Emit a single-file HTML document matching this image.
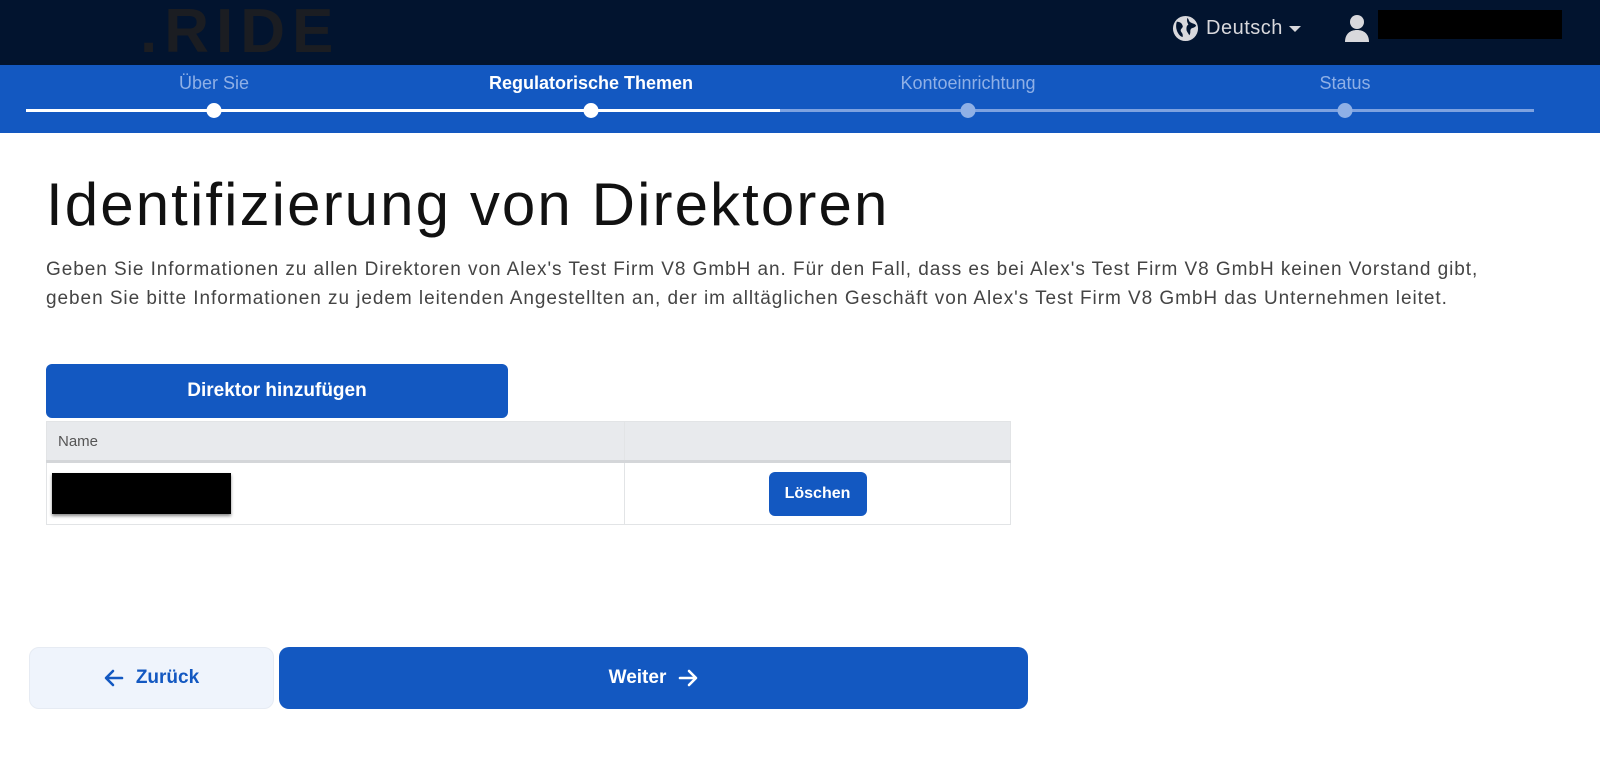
<!DOCTYPE html>
<html><head><meta charset="utf-8"><style>
*{box-sizing:border-box;margin:0;padding:0}
body{width:1600px;height:776px;overflow:hidden;background:#fff;font-family:"Liberation Sans",sans-serif;position:relative}
.hdr{position:absolute;left:0;top:0;width:1600px;height:65px;background:#02142f}
.logo{position:absolute;left:140px;top:-4px;font-size:62px;font-weight:bold;color:#1b1d22;letter-spacing:7px}
.lang{position:absolute;left:1172px;top:15px;color:#d8d8dc;font-size:20px;display:flex;align-items:center}
.stp{position:absolute;left:0;top:65px;width:1600px;height:68px;background:#1358c1}
.lbl{position:absolute;top:8px;font-size:18px;transform:translateX(-50%);white-space:nowrap;color:#8fb0e6}
.dot{position:absolute;top:38px;width:15px;height:15px;border-radius:50%;transform:translateX(-50%)}
h1{position:absolute;left:46px;top:170px;font-size:60px;font-weight:normal;color:#111;letter-spacing:2.1px}
p.d{position:absolute;left:46px;top:255px;width:1540px;font-size:19px;line-height:29px;color:#444;letter-spacing:0.95px;white-space:nowrap}
.btn{position:absolute;background:#1358c1;color:#fff;font-weight:bold;display:flex;align-items:center;justify-content:center;border-radius:6px}
table{position:absolute;left:46px;top:421px;width:965px;border-collapse:collapse}
td,th{border:1px solid #e2e4e6}
</style></head><body>
<div class="hdr">
<div class="logo">.RIDE</div>
<div class="lang"><svg width="27" height="27" viewBox="0 0 28 28"><circle cx="14" cy="14" r="13" fill="#d8d8dc"/><path d="M5 7c3 0 5 1 6 4 1 2-2 3-2 5 0 2 3 3 2 7-3-1-5-4-6-7-1-3-1-6 0-9zM16 3c2 2 1 4 4 5 2 1 4 1 5 3-1 2-3 2-5 3-2 2 0 4-2 7-1-2-3-4-3-6 0-2 0-4 2-5-1-2-2-4-1-7z" fill="#02142f"/></svg><span style="margin-left:7px;letter-spacing:0.5px">Deutsch</span><span style="margin-left:6px;border-left:6px solid transparent;border-right:6px solid transparent;border-top:6px solid #d8d8dc"></span></div>
<svg style="position:absolute;left:1344px;top:14px" width="26" height="28" viewBox="0 0 26 28"><circle cx="13" cy="8" r="7" fill="#d8d8dc"/><path d="M1 28c0-8 5-12 12-12s12 4 12 12z" fill="#d8d8dc"/></svg>
<div style="position:absolute;left:1378px;top:10px;width:184px;height:29px;background:#000"></div>
</div>
<div class="stp">
<div style="position:absolute;left:26px;top:44px;width:754px;height:3px;background:#fff"></div>
<div style="position:absolute;left:780px;top:44px;width:754px;height:3px;background:#7ea2e0"></div>
<div class="lbl" style="left:214px">Über Sie</div>
<div class="lbl" style="left:591px;color:#fff;font-weight:bold">Regulatorische Themen</div>
<div class="lbl" style="left:968px">Kontoeinrichtung</div>
<div class="lbl" style="left:1345px">Status</div>
<div class="dot" style="left:214px;background:#fff"></div>
<div class="dot" style="left:591px;background:#fff"></div>
<div class="dot" style="left:968px;background:#8fb0e6"></div>
<div class="dot" style="left:1345px;background:#8fb0e6"></div>
</div>
<h1>Identifizierung von Direktoren</h1>
<p class="d">Geben Sie Informationen zu allen Direktoren von Alex's Test Firm V8 GmbH an. Für den Fall, dass es bei Alex's Test Firm V8 GmbH keinen Vorstand gibt,<br>geben Sie bitte Informationen zu jedem leitenden Angestellten an, der im alltäglichen Geschäft von Alex's Test Firm V8 GmbH das Unternehmen leitet.</p>
<div class="btn" style="left:46px;top:364px;width:462px;height:54px;font-size:19px">Direktor hinzufügen</div>
<table>
<tr style="height:40px;background:#e8eaed"><th style="width:578px;text-align:left;font-weight:normal;font-size:15px;color:#555;padding-left:11px;border-bottom:3px solid #d4d6d9">Name</th><th style="border-bottom:3px solid #d4d6d9"></th></tr>
<tr style="height:63px"><td style="padding-left:5px"><div style="width:179px;height:41px;background:#000;box-shadow:0 2px 3px #888"></div></td><td style="position:relative"><div class="btn" style="position:relative;margin:0 auto;left:0;width:98px;height:44px;font-size:16px">Löschen</div></td></tr>
</table>
<div class="btn" style="left:29px;top:647px;width:245px;height:62px;background:#eff4fc;color:#1358c1;font-size:19px;border:1px solid #e6ebf3;border-radius:10px"><svg width="20" height="18" viewBox="0 0 20 18" style="margin-right:12px"><path d="M18 9H3M9 2L2 9l7 7" fill="none" stroke="#1358c1" stroke-width="2.6" stroke-linecap="round" stroke-linejoin="round"/></svg>Zurück</div>
<div class="btn" style="left:279px;top:647px;width:749px;height:62px;font-size:19px;border-radius:10px">Weiter<svg width="20" height="18" viewBox="0 0 20 18" style="margin-left:12px"><path d="M2 9h15M11 2l7 7-7 7" fill="none" stroke="#fff" stroke-width="2.6" stroke-linecap="round" stroke-linejoin="round"/></svg></div>
</body></html>
